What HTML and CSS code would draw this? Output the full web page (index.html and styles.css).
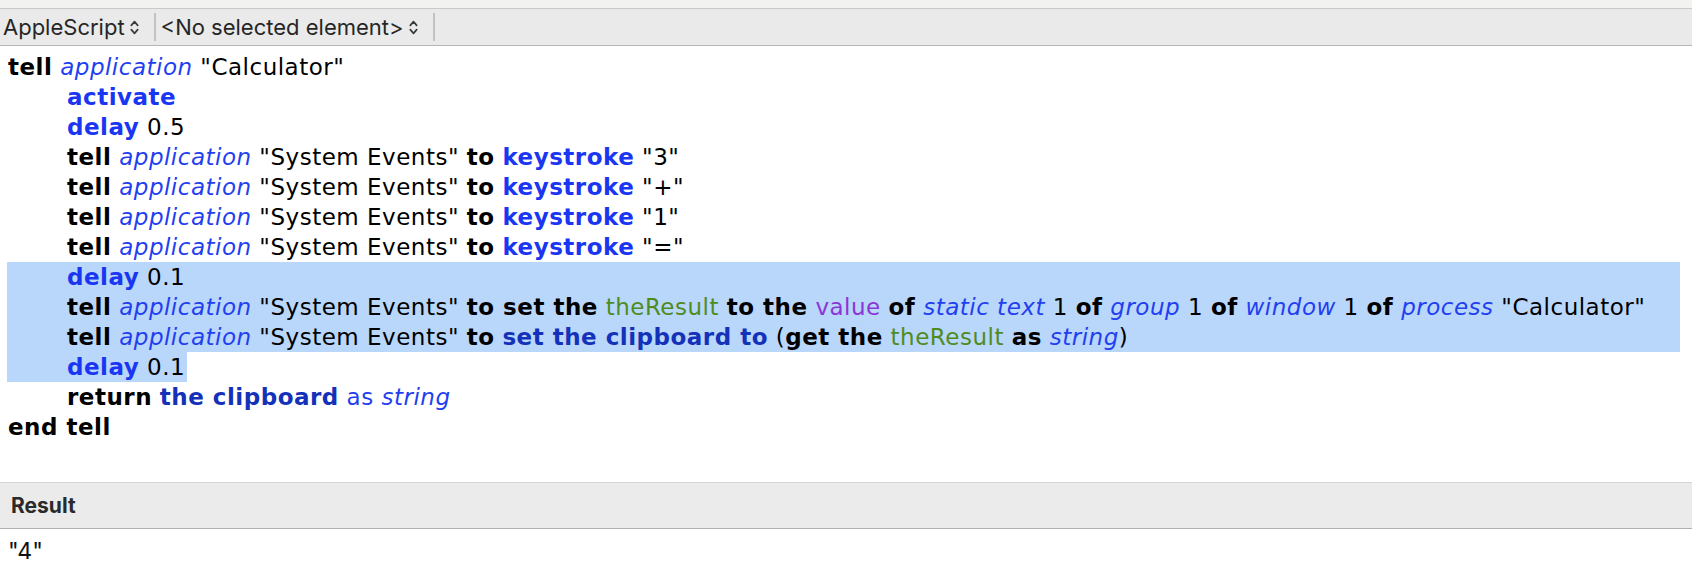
FILE: index.html
```html
<!DOCTYPE html>
<html lang="en">
<head>
    <meta charset="UTF-8">
    <meta name="viewport" content="width=device-width, initial-scale=1.0">
    <title>Script Editor</title>
    <link rel="stylesheet" href="styles.css">
</head>
<body>
    <div class="titlebar"></div>

    <div class="toolbar">
        <div class="popup">
            <span>AppleScript</span>
            <svg class="updown" viewBox="0 0 8 16"><path d="M1 6 L4 2.5 L7 6 M1 10 L4 13.5 L7 10"/></svg>
        </div>
        <div class="sep"></div>
        <div class="popup">
            <span>&lt;No selected element&gt;</span>
            <svg class="updown" viewBox="0 0 8 16"><path d="M1 6 L4 2.5 L7 6 M1 10 L4 13.5 L7 10"/></svg>
        </div>
        <div class="sep"></div>
    </div>

    <div class="editor">
        <div class="line"><b>tell</b> <i>application</i> "Calculator"</div>
        <div class="line">	<b class="cmd">activate</b></div>
        <div class="line">	<b class="cmd">delay</b> 0.5</div>
        <div class="line">	<b>tell</b> <i>application</i> "System Events" <b>to</b> <b class="cmd">keystroke</b> "3"</div>
        <div class="line">	<b>tell</b> <i>application</i> "System Events" <b>to</b> <b class="cmd">keystroke</b> "+"</div>
        <div class="line">	<b>tell</b> <i>application</i> "System Events" <b>to</b> <b class="cmd">keystroke</b> "1"</div>
        <div class="line">	<b>tell</b> <i>application</i> "System Events" <b>to</b> <b class="cmd">keystroke</b> "="</div>
        <div class="line sel">	<b class="cmd">delay</b> 0.1</div>
        <div class="line sel">	<b>tell</b> <i>application</i> "System Events" <b>to set the</b> <span class="var">theResult</span> <b>to the</b> <span class="prop">value</span> <b>of</b> <i>static text</i> 1 <b>of</b> <i>group</i> 1 <b>of</b> <i>window</i> 1 <b>of</b> <i>process</i> "Calculator"</div>
        <div class="line sel">	<b>tell</b> <i>application</i> "System Events" <b>to</b> <b class="osax">set the clipboard to</b> (<b>get the</b> <span class="var">theResult</span> <b>as</b> <i>string</i>)</div>
        <div class="line"><span class="sel-part">	<b class="cmd">delay</b> 0.1</span></div>
        <div class="line">	<b>return</b> <b class="osax">the clipboard</b> <span class="plain-blue">as</span> <i>string</i></div>
        <div class="line"><b>end tell</b></div>
    </div>

    <div class="result-header">Result</div>
    <div class="result-body">"4"</div>
</body>
</html>
```

FILE: styles.css
```css
body {
    margin: 0;
    background-color: #ffffff;
    font-family: Inter, "Liberation Sans", sans-serif;
    color: #262626;
}

.titlebar {
    height: 8px;
    background-color: #f2f2f0;
    border-bottom: 1px solid #c9c9c9;
}

.toolbar {
    display: flex;
    align-items: center;
    height: 36px;
    background-color: #eaeaea;
    border-bottom: 1px solid #b5b5b5;
    padding-left: 3px;
}

.popup {
    display: flex;
    align-items: center;
    gap: 5px;
    font-size: 22px;
    padding-right: 15px;
}

.popup + .sep + .popup {
    padding-left: 5px;
}

.updown {
    width: 9px;
    height: 17px;
    fill: none;
    stroke: #3a3a3a;
    stroke-width: 1.6;
    stroke-linecap: round;
    stroke-linejoin: round;
}

.sep {
    width: 2px;
    height: 28px;
    background-color: #c2c2c2;
}

.editor {
    height: 436px;
    box-sizing: border-box;
    padding: 6px 12px 0 7px;
    font-family: "DejaVu Sans", Verdana, sans-serif;
    font-size: 23px;
    letter-spacing: 0.5px;
    color: #000000;
}

.line {
    height: 30px;
    line-height: 30px;
    padding-left: 1px;
    white-space: pre;
    tab-size: 59px;
    -moz-tab-size: 59px;
}

.line b {
    font-weight: bold;
}

.line i {
    color: #1f3ff0;
    font-style: italic;
}

.cmd {
    color: #1a36f2;
}

.osax {
    color: #1331b9;
}

.var {
    color: #4f8c1e;
}

.prop {
    color: #8b36d6;
}

.plain-blue {
    color: #1f3ff0;
}

.sel {
    background-color: #b9d6fb;
}

.sel-part {
    display: inline-block;
    margin-left: -1px;
    padding-left: 1px;
    padding-right: 2px;
    background-color: #b9d6fb;
}

.result-header {
    height: 45px;
    line-height: 45px;
    padding-left: 11px;
    background-color: #ebebeb;
    border-top: 1px solid #d4d4d4;
    border-bottom: 1px solid #b0b0b0;
    font-size: 21px;
    font-weight: bold;
    color: #2a2a2a;
}

.result-body {
    padding: 8px 0 0 8px;
    font-size: 23px;
    color: #111111;
}
```
